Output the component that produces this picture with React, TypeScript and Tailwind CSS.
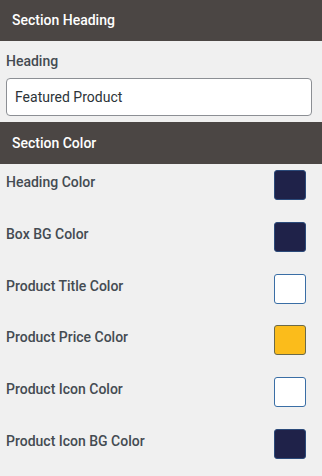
import React from "react";

const rows: { label: string; color: string; border: string }[] = [
  { label: "Heading Color", color: "bg-[#1f2249]", border: "border-[#2b4a7a]" },
  { label: "Box BG Color", color: "bg-[#1f2249]", border: "border-[#2b4a7a]" },
  { label: "Product Title Color", color: "bg-white", border: "border-[#3a6ea5]" },
  { label: "Product Price Color", color: "bg-[#fbbc1b]", border: "border-[#6b6a4a]" },
  { label: "Product Icon Color", color: "bg-white", border: "border-[#3a6ea5]" },
  { label: "Product Icon BG Color", color: "bg-[#1f2249]", border: "border-[#2b4a7a]" },
];

export default function App() {
  return (
    <div
      className="w-[322px] h-[476px] bg-[#f0f0f0] overflow-hidden"
      style={{ fontFamily: "Roboto, 'Liberation Sans', sans-serif" }}
    >
      <div className="h-[41px] bg-[#4b4644] flex items-center pl-[12px] text-white text-[14px] font-medium">
        Section Heading
      </div>
      <div className="px-[6px] pt-[10px]">
        <div className="text-[14px] font-medium text-[#444b52] leading-[20px]">Heading</div>
        <div className="mt-[7px] h-[38px] w-[306px] bg-white border border-[#8c8f94] rounded-[4px] flex items-center pl-[8px] text-[14px] text-[#2c3338]">
          Featured Product
        </div>
      </div>
      <div className="mt-[6px] h-[42px] bg-[#4b4644] flex items-center pl-[12px] text-white text-[14px] font-medium">
        Section Color
      </div>
      <div className="pt-[6px] pl-[6px] pr-[16px]">
        {rows.map((r) => (
          <div key={r.label} className="flex items-start justify-between h-[51.8px]">
            <div className="mt-[2px] text-[14px] font-medium text-[#444b52] leading-[20px]">{r.label}</div>
            <div className={`w-[32px] h-[30px] rounded-[3px] border ${r.color} ${r.border}`} />
          </div>
        ))}
      </div>
    </div>
  );
}
